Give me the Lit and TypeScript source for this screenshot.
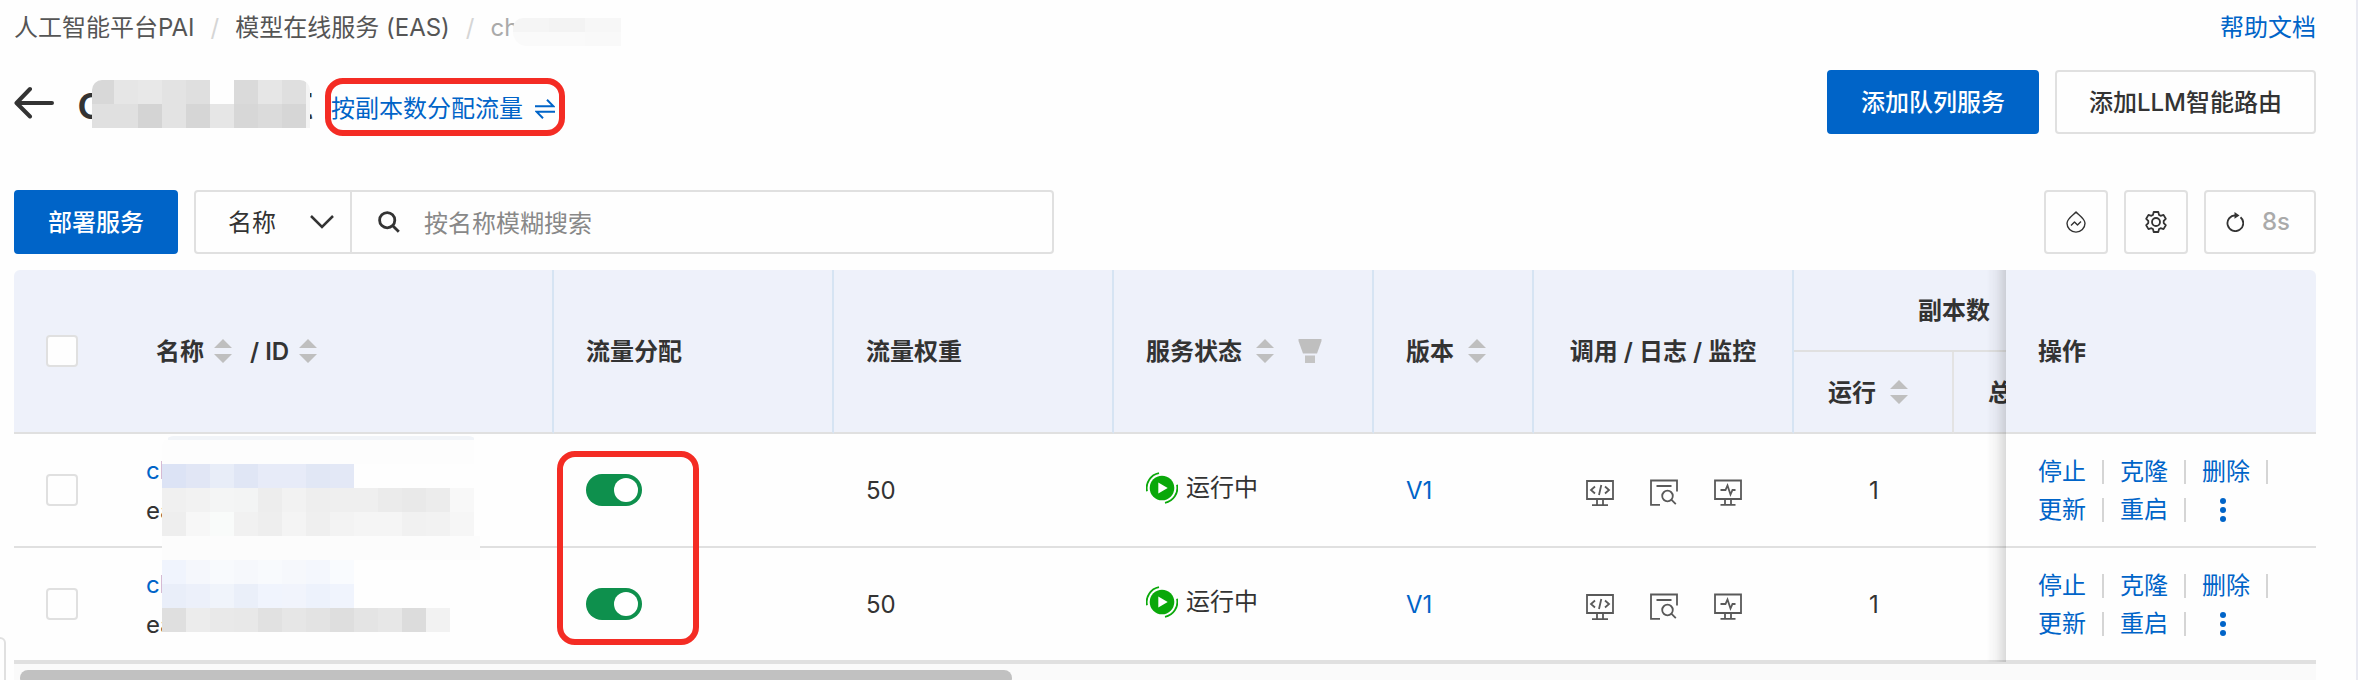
import { LitElement, html, svg, css } from "lit";
import { customElement, property, state } from "lit/decorators.js";

type Band = { y: number; h: number; cells: [number, number, string][] };

const strip = (y: number, h: number, x: number, step: number, colors: string[]): Band => ({
  y,
  h,
  cells: colors.map((c, i) => [x + i * step, step, c] as [number, number, string]),
});

/* Pixelated blocks that hide private names. */
@customElement("pixel-mask")
class PixelMask extends LitElement {
  @property({ type: Number }) width = 0;
  @property({ type: Number }) height = 0;
  @property({ attribute: false }) bands: Band[] = [];

  static styles = css`
    :host { display: block; overflow: hidden; pointer-events: none; }
    svg { display: block; }
  `;

  render() {
    return html`<svg width=${this.width} height=${this.height} shape-rendering="crispEdges" aria-hidden="true">
      ${this.bands.map((b) => b.cells.map(([x, w, c]) => svg`<rect x=${x} y=${b.y} width=${w} height=${b.h} fill=${c}></rect>`))}
    </svg>`;
  }
}

const crumbMask: Band[] = [
  strip(0, 14, 0, 36, ["#f5f5f5", "#f3f3f3", "#f7f7f7"]),
  strip(14, 14, 0, 36, ["#fafafa", "#fafafa", "#f9f9f9"]),
];

const titleMask: Band[] = [
  { y: 0, h: 24, cells: [[0, 22, "#d8d8d8"], [22, 24, "#e6e6e6"], [46, 24, "#e8e8e8"], [70, 24, "#e3e3e3"], [94, 24, "#dfdfdf"], [118, 24, "#fefefe"], [142, 24, "#dadada"], [166, 24, "#e6e6e6"], [190, 24, "#dfdfdf"], [214, 4, "#f4f4f4"]] },
  { y: 24, h: 24, cells: [[0, 46, "#e0e0e0"], [46, 24, "#d4d4d4"], [70, 24, "#e3e3e3"], [94, 24, "#d6d6d6"], [118, 24, "#e6e6e6"], [142, 24, "#d7d7d7"], [166, 24, "#dbdbdb"], [190, 24, "#d6d6d6"], [214, 4, "#f4f4f4"]] },
];

const firstRowMask: Band[] = [
  { y: 0, h: 4, cells: [[6, 306, "#f1f4f8"]] },
  { y: 4, h: 24, cells: [[0, 312, "#fdfdfd"]] },
  { y: 28, h: 24, cells: [[0, 312, "#fefefe"]] },
  strip(28, 24, 0, 24, ["#dce3f5", "#e1e6f5", "#e8edf8", "#e0e6f5", "#e7ebf8", "#e7ebf8", "#e1e7f5", "#e3e8f6"]),
  strip(52, 24, 0, 24, ["#f0f0f0", "#f2f2f2", "#f4f5f5", "#f3f4f4", "#ededed", "#f2f2f2", "#eeeeee", "#efefef", "#efefef", "#ebebeb", "#e9e9e9", "#ececec", "#f8f8f8"]),
  strip(76, 24, 0, 24, ["#eeeeee", "#f7f7f7", "#f9fbfa", "#f1f1f1", "#eeeeee", "#f4f4f4", "#efefef", "#f3f3f3", "#f5f5f5", "#f5f5f5", "#f1f1f1", "#f2f2f2", "#f6f6f6"]),
  { y: 100, h: 24, cells: [[0, 318, "#fcfcfc"]] },
];

const secondRowMask: Band[] = [
  { y: 0, h: 90, cells: [[0, 312, "#fefefe"]] },
  strip(0, 24, 0, 24, ["#f0f4fd", "#f5f7fc", "#f8fafd", "#f6f8fc", "#f8fafd", "#f6f8fc", "#f4f7fd", "#f9fbfe"]),
  strip(24, 24, 0, 24, ["#e9eef9", "#ecf0fa", "#f0f4fb", "#eaeff9", "#f0f4fd", "#f1f4fc", "#edf2fc", "#f0f4fd"]),
  strip(48, 24, 0, 24, ["#dfdfdf", "#ececec", "#e9e9e9", "#e8e8e8", "#e1e1e1", "#e6e6e6", "#e3e3e3", "#dedede", "#e4e4e4", "#e7e7e7", "#dcdcdc", "#f2f2f2"]),
];

const sorter = html`<svg class="sorter" width="18" height="24" viewBox="0 0 18 24" aria-hidden="true">
  <path d="M9 0l9 9H0zM9 24l9-9H0z" fill="#bfbfbf"/></svg>`;

const filterIcon = html`<svg class="filter" width="24" height="24" viewBox="0 0 24 24" aria-hidden="true">
  <path d="M0.5 0h23v2l-4.5 12.500h-14L0.500 2z" fill="#bfbfbf"/><rect x="7" y="16.500" width="10" height="7.500" fill="#c4c4c4"/></svg>`;

const runningIcon = html`<svg width="32" height="32" viewBox="0 0 32 32" fill="none" aria-hidden="true">
  <circle cx="16" cy="16" r="12.300" fill="#0aa80a"/><path d="M12.300 10.500l9.400 5.500-9.400 5.500z" fill="#fff"/>
  <path d="M1 19.200A15.200 15.200 0 0 1 13 1.100M31 12.800A15.200 15.200 0 0 1 19 30.900" stroke="#0aa80a" stroke-width="1.800"/></svg>`;

const callIcon = html`<svg width="28" height="28" viewBox="0 0 28 28" fill="none" stroke="#595959" stroke-width="1.800" aria-hidden="true">
  <path d="M1 2h26v18H1zM11 20v5.500M17 20v5.500M6 26.100h16M9 7.500L5 11l4 3.500M19 7.500l4 3.500-4 3.500M15.300 6l-2.300 10"/></svg>`;

const logIcon = html`<svg width="28" height="28" viewBox="0 0 28 28" fill="none" stroke="#595959" stroke-width="1.800" aria-hidden="true">
  <path d="M27 12.500V1.500H1v24.300h9M6.500 7h15"/><circle cx="17.500" cy="17" r="5.300"/><path d="M21.300 20.700l4.500 4.500"/></svg>`;

const monitorIcon = html`<svg width="28" height="28" viewBox="0 0 28 28" fill="none" stroke="#595959" stroke-width="1.800" aria-hidden="true">
  <path d="M1 1.500h26v18.500H1zM11 20v5.500M17 20v5.500M6.500 25.800h15M6.500 11h5l2-4.500 3 9 2-4.500h3"/></svg>`;

const moreIcon = html`<svg width="6" height="26" viewBox="0 0 6 26" fill="#0064c8" aria-hidden="true">
  <circle cx="3" cy="4" r="3"/><circle cx="3" cy="13" r="3"/><circle cx="3" cy="22" r="3"/></svg>`;

@customElement("app-root")
class AppRoot extends LitElement {
  @state() private rows = [
    { id: 1, weight: 50, version: "V1", running: 1, mask: firstRowMask, maskWidth: 318, maskHeight: 124 },
    { id: 2, weight: 50, version: "V1", running: 1, mask: secondRowMask, maskWidth: 312, maskHeight: 90 },
  ];

  static styles = css`
    :host {
      display: block;
      position: relative;
      box-sizing: border-box;
      height: 100vh;
      overflow: hidden;
      padding: 12px 40px 0 14px;
      border-right: 2px solid #e9eaf2;
      background: #fefefe;
      color: #333;
      font: 400 24px/32px Inter, "Noto Sans CJK SC", sans-serif;
    }
    *, *::before { box-sizing: border-box; }
    svg { display: block; flex: none; }
    a { color: #0064c8; text-decoration: none; }
    button, input, select { font: inherit; color: inherit; margin: 0; }
    button { cursor: pointer; padding: 0; border: 0; background: none; }

    .top { display: flex; justify-content: space-between; height: 32px; }
    .crumbs { display: flex; gap: 16px; }
    .crumbs a { color: #555; }
    .slash { color: #d5d5d5; }
    .masked { position: relative; display: flex; }
    .masked pixel-mask { position: absolute; z-index: 1; }
    .crumb-name { color: #aaa; }
    .crumb-name pixel-mask { left: 22px; top: 6px; border-radius: 10px 0 0 14px; }

    .head { display: flex; justify-content: space-between; margin-top: 26px; height: 64px; }
    .title { display: flex; align-items: flex-start; }
    .back { margin-top: 16px; }
    .name {
      width: 236px; margin: 8px 12px 0 22px; justify-content: space-between;
      font-size: 48px; line-height: 48px; font-weight: 500;
    }
    .name pixel-mask { left: 15px; top: 2px; border-radius: 10px 10px 0 0; }
    .flow {
      display: flex; align-items: center; gap: 12px; height: 58px; margin-top: 8px;
      padding: 4px 4px 0 0; border: 6px solid #f42c24; border-radius: 18px; white-space: nowrap;
    }
    .buttons { display: flex; gap: 16px; }
    .btn {
      height: 64px; padding: 2px 32px 0; border: 2px solid #e0e0e0; border-radius: 4px;
      font-weight: 500; white-space: nowrap;
    }
    .primary { background: #0064c8; border-color: #0064c8; color: #fff; }

    .tools { display: flex; justify-content: space-between; margin-top: 56px; }
    .left { display: flex; gap: 16px; flex: 0 1 1040px; min-width: 0; }
    .search {
      display: flex; flex: 1; min-width: 0; height: 64px;
      border: 2px solid #e0e0e0; border-radius: 4px;
    }
    .pick { display: grid; flex: none; width: 156px; align-items: center; border-right: 2px solid #e0e0e0; }
    .pick select, .pick svg { grid-area: 1 / 1; }
    .pick select {
      appearance: none; width: 100%; height: 60px; padding: 2px 0 0 32px; border: 0;
      background: none; outline: 0;
    }
    .pick svg { justify-self: end; margin-right: 16px; pointer-events: none; }
    .query { display: flex; flex: 1; align-items: center; gap: 24px; padding-left: 26px; min-width: 0; }
    .query input { flex: 1; min-width: 0; height: 60px; padding: 2px 0 0; border: 0; outline: 0; background: none; }
    .query input::placeholder { color: #888; opacity: 1; }
    .square {
      display: flex; align-items: center; justify-content: center; min-width: 64px; height: 64px;
      border: 2px solid #e0e0e0; border-radius: 4px;
    }
    .refresh { width: 112px; gap: 18px; padding-right: 4px; color: #aaa; font-weight: 500; }

    .frame { margin-top: 16px; overflow: hidden; border-radius: 6px 6px 0 0; border-bottom: 2px solid #e0e0e0; }
    table { width: 100%; min-width: 2410px; table-layout: fixed; border-collapse: separate; border-spacing: 0; }
    th, td { padding: 2px 32px 0; text-align: left; white-space: nowrap; border-bottom: 2px solid #e0e0e0; }
    th { height: 82px; background: #eef1fa; font-weight: 600; border-right: 2px solid #d6e4f3; }
    td { position: relative; height: 114px; }
    .w-check { width: 96px; }
    .w-name { width: 444px; }
    .w-flow { width: 280px; }
    .w-mid { width: 260px; }
    .w-small { width: 160px; }
    .w-ops { width: 310px; }
    th.check { border-right: 0; }
    .control { padding-top: 0; }
    th.title-name { padding-left: 46px; }
    th.center, td.center { text-align: center; }
    th.center { padding-left: 0; padding-right: 0; }
    th.sub { padding: 2px 34px 0; border-right-color: #e3e3e3; }
    th.last, th.ops { border-right: 0; }
    .label { display: flex; align-items: center; gap: 14px; }
    .label.pair { gap: 10px; }
    .label.pair .sorter + span { margin-left: 8px; }
    .sorter, .filter { margin-top: -3px; }
    .filter { margin-left: 10px; }

    .ops { position: sticky; right: 0; z-index: 2; background: #fefefe; }
    th.ops { background: #eef1fa; }
    .ops::before {
      content: ""; position: absolute; left: -20px; top: 0; bottom: -2px; width: 20px;
      background: linear-gradient(to left, rgba(0, 0, 0, 0.14), rgba(0, 0, 0, 0.04) 50%, transparent);
      pointer-events: none;
    }
    .box {
      display: block; appearance: none; width: 32px; height: 32px;
      border: 2px solid #e0e0e0; border-radius: 4px; background: #fefefe;
    }
    .switch {
      display: block; appearance: none; width: 56px; height: 32px; padding: 4px;
      border-radius: 16px; background: #bbb;
    }
    .switch::before { content: ""; display: block; width: 24px; height: 24px; border-radius: 12px; background: #fff; }
    .switch:checked { background: #0e904d; }
    .switch:checked::before { margin-left: 24px; }
    td.svc { padding: 2px 36px 0; line-height: 40px; }
    td.svc pixel-mask { position: absolute; z-index: 1; left: 52px; top: 2px; border-radius: 12px 12px 0 0; }
    tr + tr td.svc pixel-mask { top: 12px; border-radius: 0; }
    .service { display: flex; flex-direction: column; }
    .mark {
      position: absolute; z-index: 1; left: 3px; top: 17px; width: 142px; height: 194px;
      border: 6px solid #f42c24; border-radius: 18px; pointer-events: none;
    }
    .status { display: flex; align-items: center; gap: 8px; padding-bottom: 6px; }
    .icons { display: flex; justify-content: center; gap: 36px; padding-top: 4px; }
    .line { display: flex; align-items: center; height: 38px; }
    .line a::after {
      content: ""; display: inline-block; width: 2px; height: 24px; margin: 0 16px;
      background: #d5d5d5; vertical-align: -4px;
    }
    .more { display: flex; justify-content: center; width: 42px; }

    .track { height: 28px; padding: 6px; background: #fafafa; }
    .thumb { width: 43.3%; height: 16px; border-radius: 8px; background: #c1c1c1; }
    .drawer {
      position: absolute; left: 0; top: 637px; width: 6px; height: 60px;
      border: 2px solid #e0e0e0; border-left: 0; border-radius: 0 6px 6px 0;
    }
  `;

  private row(r: (typeof this.rows)[number], first: boolean) {
    return html`<tr>
      <td class="control"><input class="box" type="checkbox" aria-label="选择" /></td>
      <td class="svc">
        <div class="service"><a href="#">ch</a><span>eas</span></div>
        <pixel-mask .width=${r.maskWidth} .height=${r.maskHeight} .bands=${r.mask}></pixel-mask>
      </td>
      <td class="control">
        <input class="switch" type="checkbox" role="switch" aria-label="流量分配" checked />
        ${first ? html`<div class="mark"></div>` : ""}
      </td>
      <td>${r.weight}</td>
      <td><div class="status">${runningIcon}<span>运行中</span></div></td>
      <td><a href="#">${r.version}</a></td>
      <td>
        <div class="icons">
          <button aria-label="调用">${callIcon}</button>
          <button aria-label="日志">${logIcon}</button>
          <button aria-label="监控">${monitorIcon}</button>
        </div>
      </td>
      <td class="center">${r.running}</td>
      <td></td>
      <td class="ops">
        <div class="line"><a href="#">停止</a><a href="#">克隆</a><a href="#">删除</a></div>
        <div class="line"><a href="#">更新</a><a href="#">重启</a><button class="more" aria-label="更多">${moreIcon}</button></div>
      </td>
    </tr>`;
  }

  render() {
    return html`
      <div class="top">
        <nav class="crumbs">
          <a href="#">人工智能平台PAI</a><span class="slash">/</span>
          <a href="#">模型在线服务 (EAS)</a><span class="slash">/</span>
          <span class="crumb-name masked">ch
            <pixel-mask .width=${108} .height=${28} .bands=${crumbMask}></pixel-mask>
          </span>
        </nav>
        <a href="#">帮助文档</a>
      </div>

      <div class="head">
        <div class="title">
          <button class="back" aria-label="返回">
            <svg width="41" height="34" viewBox="0 0 41 34" fill="none" stroke="#333" stroke-width="4" stroke-linecap="round" stroke-linejoin="round">
              <path d="M38 17H3M16 3L2.500 17 16 30.500"/></svg>
          </button>
          <div class="name masked"><span>c</span><span>t</span>
            <pixel-mask .width=${218} .height=${48} .bands=${titleMask}></pixel-mask>
          </div>
          <a class="flow" href="#"><span>按副本数分配流量</span>
            <svg width="20" height="20" viewBox="0 0 20 20" fill="none" stroke="#0064c8" stroke-width="2">
              <path d="M0 7.300h18.500L12 0.800M20 12.700H1.500L8 19.200"/></svg>
          </a>
        </div>
        <div class="buttons">
          <button class="btn primary">添加队列服务</button>
          <button class="btn">添加LLM智能路由</button>
        </div>
      </div>

      <div class="tools">
        <div class="left">
          <button class="btn primary">部署服务</button>
          <div class="search">
            <div class="pick">
              <select aria-label="搜索字段"><option>名称</option></select>
              <svg width="24" height="14" viewBox="0 0 24 14" fill="none" stroke="#333" stroke-width="2.500"><path d="M1 1l11 11L23 1"/></svg>
            </div>
            <label class="query">
              <svg width="22" height="22" viewBox="0 0 22 22" fill="none" stroke="#333" stroke-width="2.800"><circle cx="9.200" cy="9.200" r="7.600"/><path d="M14.500 14.500l6.300 6.300"/></svg>
              <input type="text" placeholder="按名称模糊搜索" aria-label="按名称模糊搜索" />
            </label>
          </div>
        </div>
        <div class="buttons">
          <button class="square" aria-label="用量">
            <svg width="20" height="22" viewBox="0 0 20 22" fill="none" stroke="#333" stroke-width="1.400" stroke-linejoin="round">
              <path d="M10 1C8.500 3 1 7.500 1 12.300a9 8.800 0 0 0 18 0C19 7.500 11.500 3 10 1z"/><path d="M5 14.500l3.500-3.500 3 3L15 10.500"/></svg>
          </button>
          <button class="square" aria-label="设置">
            <svg width="22" height="22" viewBox="0 0 22 22" fill="none" stroke="#333" stroke-width="1.800" stroke-linejoin="round">
              <path d="M8.700 1h4.600l.7 2.900 1.600.9 2.900-.9 2.300 3.900-2.100 2.100v2.200l2.100 2.100-2.300 3.900-2.900-.9-1.600.9-.7 2.900H8.700L8 18.100l-1.600-.9-2.900.9L1.200 14.200l2.100-2.100V9.900L1.200 7.800l2.300-3.900 2.900.9L8 3.900z"/><circle cx="11" cy="11" r="4"/></svg>
          </button>
          <button class="square refresh">
            <svg width="18" height="20" viewBox="0 0 18 20" fill="none" stroke="#333" stroke-width="1.800">
              <path d="M14.500 5.200A7.900 7.900 0 1 1 9.500 3.300"/><path d="M8.500 0l5 3.400-5 3.300z" fill="#333" stroke="none"/></svg>
            <span>8s</span>
          </button>
        </div>
      </div>

      <div class="frame">
        <table>
          <colgroup>
            <col class="w-check" /><col class="w-name" /><col class="w-flow" /><col class="w-flow" /><col class="w-mid" />
            <col class="w-small" /><col class="w-mid" /><col class="w-small" /><col class="w-small" /><col class="w-ops" />
          </colgroup>
          <thead>
            <tr>
              <th class="check control" rowspan="2"><input class="box" type="checkbox" aria-label="全选" /></th>
              <th class="title-name" rowspan="2"><div class="label pair"><span>名称</span>${sorter}<span>/ ID</span>${sorter}</div></th>
              <th rowspan="2">流量分配</th>
              <th rowspan="2">流量权重</th>
              <th rowspan="2"><div class="label"><span>服务状态</span>${sorter}${filterIcon}</div></th>
              <th rowspan="2"><div class="label"><span>版本</span>${sorter}</div></th>
              <th class="center" rowspan="2">调用 / 日志 / 监控</th>
              <th class="center last" colspan="2">副本数</th>
              <th class="ops" rowspan="2">操作</th>
            </tr>
            <tr>
              <th class="sub"><div class="label"><span>运行</span>${sorter}</div></th>
              <th class="sub last">总数</th>
            </tr>
          </thead>
          <tbody>${this.rows.map((r, i) => this.row(r, i === 0))}</tbody>
        </table>
      </div>
      <div class="track"><div class="thumb"></div></div>
      <div class="drawer"></div>
    `;
  }
}
